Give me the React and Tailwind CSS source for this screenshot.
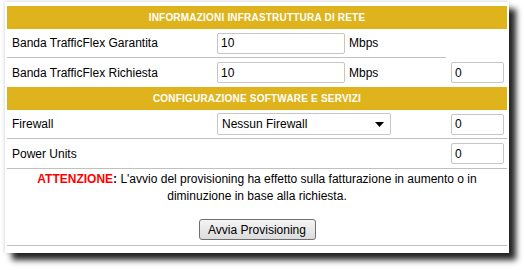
import React from 'react';

function SectionHeader({ children }) {
  return (
    <div className="h-[23px] bg-[#dfb31b] flex items-center justify-center text-white font-bold text-[10px] tracking-[0.2px]">
      {children}
    </div>
  );
}

function TextBox({ value, width }) {
  return (
    <input
      type="text"
      defaultValue={value}
      className={`${width} h-[21px] border border-[#c6c6c6] rounded-[2px] px-[3px] text-[12px] text-black bg-white outline-none`}
    />
  );
}

export default function App() {
  return (
    <div className="w-[524px] h-[270px] bg-white pt-[2px] pl-[5px] font-['Liberation_Sans',Arial,sans-serif] text-[12px] text-black">
      <div className="w-[504px] h-[251px] bg-white px-[2px] pt-[4px] shadow-[7px_7px_6px_rgba(0,0,0,0.85),0_0_4px_rgba(0,0,0,0.2)]">
        <SectionHeader>INFORMAZIONI INFRASTRUTTURA DI RETE</SectionHeader>

        <div className="flex h-[29px]">
          <div className="w-[439px] flex items-center border-b border-[#c0c0c0]">
            <div className="w-[205px] pl-[5px]">Banda TrafficFlex Garantita</div>
            <div className="w-[134px] pl-[5px]">
              <TextBox value="10" width="w-[128px]" />
            </div>
            <div className="pl-[3px]">Mbps</div>
          </div>
          <div className="flex-1" />
        </div>

        <div className="flex items-center h-[29px]">
          <div className="w-[205px] pl-[5px]">Banda TrafficFlex Richiesta</div>
          <div className="w-[134px] pl-[5px]">
            <TextBox value="10" width="w-[128px]" />
          </div>
          <div className="w-[100px] pl-[3px]">Mbps</div>
          <div className="pl-[5px]">
            <TextBox value="0" width="w-[53px]" />
          </div>
        </div>

        <SectionHeader>CONFIGURAZIONE SOFTWARE E SERVIZI</SectionHeader>

        <div className="flex items-center h-[29px] border-b border-[#c0c0c0]">
          <div className="w-[205px] pl-[5px]">Firewall</div>
          <div className="w-[234px] pl-[5px]">
            <div className="w-[174px] h-[22px] border border-[#c6c6c6] rounded-[2px] flex items-center justify-between pl-[4px] pr-[6px] bg-white">
              <span>Nessun Firewall</span>
              <svg width="9" height="5" viewBox="0 0 9 5">
                <path d="M0 0h9L4.5 5z" fill="#000" />
              </svg>
            </div>
          </div>
          <div className="pl-[5px]">
            <TextBox value="0" width="w-[53px]" />
          </div>
        </div>

        <div className="flex items-center h-[30px] border-b border-[#c0c0c0]">
          <div className="w-[439px] pl-[5px]">Power Units</div>
          <div className="pl-[5px]">
            <TextBox value="0" width="w-[53px]" />
          </div>
        </div>

        <div className="h-[77px] border-b border-[#c0c0c0] pt-[2px] leading-[17px] text-center">
          <div className="whitespace-nowrap">
            <span className="font-bold text-[#ff0000]">ATTENZIONE</span>
            <span className="font-bold">:</span> L'avvio del provisioning ha effetto sulla fatturazione in aumento o in
          </div>
          <div className="whitespace-nowrap">diminuzione in base alla richiesta.</div>
          <div className="flex justify-center mt-[14px]">
            <button className="w-[117px] h-[21px] border border-[#707070] rounded-[3px] bg-gradient-to-b from-[#f4f4f4] to-[#dcdcdc] text-[12px] leading-none">
              Avvia Provisioning
            </button>
          </div>
        </div>
      </div>
    </div>
  );
}
